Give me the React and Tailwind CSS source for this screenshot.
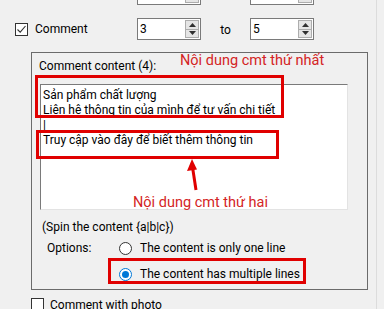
import React from 'react'

function SpinBox({ value }) {
  return (
    <div className="flex h-[22px] w-[64px] items-stretch border border-[#7a7a7a] bg-white">
      <div className="flex-1 pl-[2px] leading-[20px]">{value}</div>
      <div className="my-[1px] mr-[1px] flex w-[14px] flex-col">
        <div className="flex flex-1 items-center justify-center border border-[#adadad] bg-[#e5e5e5]">
          <svg width="7" height="4" viewBox="0 0 7 4"><path d="M0 4 L3.5 0 L7 4 Z" fill="#303030" /></svg>
        </div>
        <div className="flex flex-1 items-center justify-center border border-t-0 border-[#adadad] bg-[#e5e5e5]">
          <svg width="7" height="4" viewBox="0 0 7 4"><path d="M0 0 L3.5 4 L7 0 Z" fill="#303030" /></svg>
        </div>
      </div>
    </div>
  )
}

function CheckBox({ checked }) {
  return (
    <div className="flex h-[13px] w-[13px] shrink-0 items-center justify-center border border-[#333] bg-white">
      {checked && (
        <svg width="11" height="11" viewBox="0 0 11 11">
          <path d="M1.5 5.5 L4.2 8.2 L9.5 2" fill="none" stroke="#333" strokeWidth="1.1" />
        </svg>
      )}
    </div>
  )
}

function Radio({ checked }) {
  return checked ? (
    <div className="flex h-[13px] w-[13px] items-center justify-center rounded-full border border-[#0078d7] bg-white">
      <div className="h-[7px] w-[7px] rounded-full bg-[#0078d7]" />
    </div>
  ) : (
    <div className="h-[13px] w-[13px] rounded-full border border-[#333] bg-white" />
  )
}

export default function App() {
  return (
    <div className="relative flex h-[309px] w-[384px] overflow-hidden bg-[#f0f0f0] font-['Roboto','Noto_Sans',Arial,sans-serif] text-[12px] text-black">
      <div className="w-[376px]">
        {/* partial row above */}
        <div className="-mt-[17px] flex h-[22px] pl-[137px]">
          <SpinBox value="" />
          <div className="w-[49px]" />
          <SpinBox value="" />
        </div>

        {/* Comment row */}
        <div className="mt-[13px] flex h-[22px] items-center">
          <div className="flex w-[137px] items-center pl-[15px]">
            <CheckBox checked />
            <span className="ml-[7px] leading-none">Comment</span>
          </div>
          <SpinBox value="3" />
          <div className="w-[49px] pt-[2px] text-center">to</div>
          <SpinBox value="5" />
        </div>

        {/* Group box */}
        <div className="ml-[31px] mt-[12px] h-[238px] w-[337px] border border-[#6b6b6b]">
          <div className="pl-[7px] pt-[5px] leading-[16px]">Comment content (4):</div>
          <div className="ml-[8px] mt-[10px] h-[126px] w-[308px] border border-[#7a7a7a] border-b-[#e3e3e3] border-r-[#e3e3e3] bg-white pl-[2px] pt-[3px] leading-[15px]">
            <div>Sản phẩm chất lượng</div>
            <div>Liên hệ thông tin của mình để tư vấn chi tiết</div>
            <div>|</div>
            <div>Truy cập vào đây để biết thêm thông tin</div>
          </div>
          <div className="mt-[9px] pl-[10px] leading-[16px]">(Spin the content {'{a|b|c}'})</div>
          <div className="mt-[3px] flex h-[20px] items-center">
            <div className="w-[87px] pl-[15px]">Options:</div>
            <Radio />
            <span className="ml-[8px]">The content is only one line</span>
          </div>
          <div className="mt-[6px] flex h-[20px] items-center pl-[87px]">
            <Radio checked />
            <span className="ml-[8px]">The content has multiple lines</span>
          </div>
        </div>

        {/* Comment with photo */}
        <div className="ml-[31px] mt-[8px] flex items-start">
          <CheckBox />
          <span className="ml-[6px] -mt-[1px] leading-[16px]">Comment with photo</span>
        </div>
      </div>
      <div className="w-[8px] border-l border-[#dcdcdc]" />

      {/* annotations */}
      <div className="absolute left-[180px] top-[52px] text-[14.5px] leading-[18px] text-[#d42424]">Nội dung cmt thứ nhất</div>
      <div className="absolute left-[35px] top-[75px] h-[43px] w-[249px] border-[3px] border-[#e00000]" />
      <div className="absolute left-[36px] top-[130px] h-[29px] w-[243px] border-[3px] border-[#e00000]" />
      <svg className="absolute left-[184px] top-[157px]" width="16" height="34" viewBox="0 0 16 34">
        <path d="M12 33 L8.5 10" stroke="#e00000" strokeWidth="3" fill="none" />
        <path d="M8 2 L3 14 L13 12.5 Z" fill="#e00000" />
      </svg>
      <div className="absolute left-[133px] top-[194px] text-[14.5px] leading-[18px] text-[#d42424]">Nội dung cmt thứ hai</div>
      <div className="absolute left-[108px] top-[258px] h-[26px] w-[198px] border-[3px] border-[#e00000]" />
    </div>
  )
}
